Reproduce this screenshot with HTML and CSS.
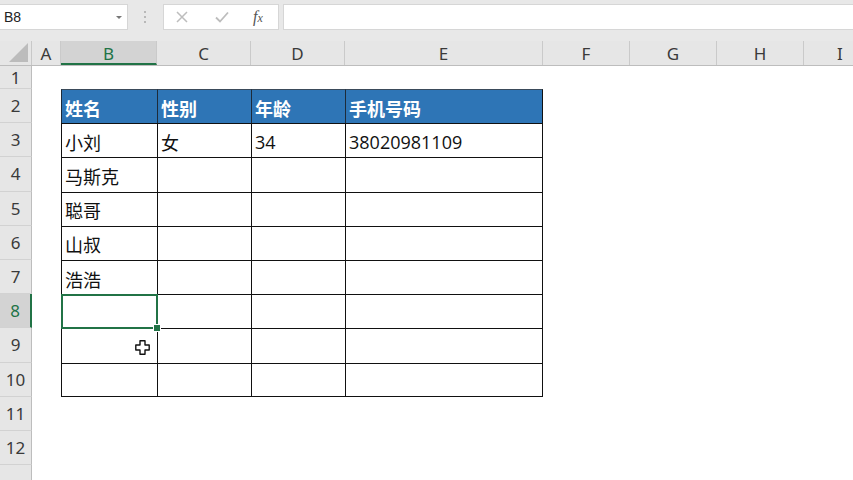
FILE: index.html
```html
<!DOCTYPE html>
<html lang="zh">
<head>
<meta charset="utf-8">
<title>Excel</title>
<link rel="stylesheet" href="styles.css">
</head>
<body>
<div class="app">
  <div class="fbar">
    <div class="namebox"><span class="ref">B8</span><span class="caret"></span></div>
    <div class="grip"><svg width="4" height="14" viewBox="0 0 4 14"><circle cx="2" cy="2" r="1" fill="#a8a8a8"/><circle cx="2" cy="7" r="1" fill="#a8a8a8"/><circle cx="2" cy="12" r="1" fill="#a8a8a8"/></svg></div>
    <div class="fxbox">
      <svg class="ico" width="12" height="12" viewBox="0 0 12 12"><path d="M1 1L11 11M11 1L1 11" stroke="#bdbdbd" stroke-width="1.5" fill="none"/></svg>
      <svg class="ico" width="14" height="12" viewBox="0 0 14 12"><path d="M1 6.5L5 10.5L13 1.5" stroke="#bdbdbd" stroke-width="1.8" fill="none"/></svg>
      <span class="fx">f<span class="x">x</span></span>
    </div>
    <div class="finput"></div>
  </div>

  <div class="sheet">
    <div class="row colhead">
      <div class="corner"><span class="tri"></span></div>
      <div class="ch wA">A</div>
      <div class="ch wB sel">B</div>
      <div class="ch wC">C</div>
      <div class="ch wD">D</div>
      <div class="ch wE">E</div>
      <div class="ch wF">F</div>
      <div class="ch wF">G</div>
      <div class="ch wF">H</div>
      <div class="ch rest">I</div>
    </div>

    <div class="row r1"><div class="rh">1</div><div class="rest"></div></div>

    <div class="row rr">
      <div class="rh">2</div><div class="c wA"></div>
      <div class="tc th wB">姓名</div><div class="tc th wC">性别</div><div class="tc th wD">年龄</div><div class="tc th wE last">手机号码</div>
      <div class="rest"></div>
    </div>
    <div class="row rr">
      <div class="rh">3</div><div class="c wA"></div>
      <div class="tc wB">小刘</div><div class="tc wC">女</div><div class="tc wD">34</div><div class="tc wE last">38020981109</div>
      <div class="rest"></div>
    </div>
    <div class="row rr">
      <div class="rh">4</div><div class="c wA"></div>
      <div class="tc wB">马斯克</div><div class="tc wC"></div><div class="tc wD"></div><div class="tc wE last"></div>
      <div class="rest"></div>
    </div>
    <div class="row rr">
      <div class="rh">5</div><div class="c wA"></div>
      <div class="tc wB">聪哥</div><div class="tc wC"></div><div class="tc wD"></div><div class="tc wE last"></div>
      <div class="rest"></div>
    </div>
    <div class="row rr">
      <div class="rh">6</div><div class="c wA"></div>
      <div class="tc wB">山叔</div><div class="tc wC"></div><div class="tc wD"></div><div class="tc wE last"></div>
      <div class="rest"></div>
    </div>
    <div class="row rr">
      <div class="rh">7</div><div class="c wA"></div>
      <div class="tc wB">浩浩</div><div class="tc wC"></div><div class="tc wD"></div><div class="tc wE last"></div>
      <div class="rest"></div>
    </div>
    <div class="row rr">
      <div class="rh rsel">8</div><div class="c wA"></div>
      <div class="tc wB active"></div><div class="tc wC"></div><div class="tc wD"></div><div class="tc wE last"></div>
      <div class="rest"></div>
    </div>
    <div class="row rr">
      <div class="rh">9</div><div class="c wA"></div>
      <div class="tc wB cur"><svg class="cursor" width="15" height="15" viewBox="0 0 15 15"><path d="M5 0.8H10V5H14.2V10H10V14.2H5V10H0.8V5H5Z" fill="#fff" stroke="#111" stroke-width="1.4" stroke-linejoin="round"/></svg></div><div class="tc wC"></div><div class="tc wD"></div><div class="tc wE last"></div>
      <div class="rest"></div>
    </div>
    <div class="row rr lastrow">
      <div class="rh">10</div><div class="c wA"></div>
      <div class="tc wB"></div><div class="tc wC"></div><div class="tc wD"></div><div class="tc wE last"></div>
      <div class="rest"></div>
    </div>
    <div class="row rr"><div class="rh">11</div><div class="rest"></div></div>
    <div class="row rr"><div class="rh">12</div><div class="rest"></div></div>
    <div class="row rr"><div class="rh"></div><div class="rest"></div></div>
  </div>
</div>
</body>
</html>
```

FILE: styles.css
```css
* { box-sizing: border-box; }
html, body { margin: 0; padding: 0; }
body {
  width: 853px;
  height: 480px;
  overflow: hidden;
  background: #fff;
  font-family: "Open Sans", "Noto Sans CJK SC", sans-serif;
}
.app { width: 853px; height: 480px; display: flex; flex-direction: column; }

/* formula bar */
.fbar {
  height: 41px;
  flex: none;
  background: #e8e8e8;
  display: flex;
  align-items: flex-start;
  padding-top: 4px;
}
.namebox {
  width: 128px;
  height: 26px;
  background: #fff;
  border: 1px solid #d6d6d6;
  border-left: none;
  display: flex;
  align-items: center;
  justify-content: space-between;
  padding: 0 5px 0 4px;
}
.ref { font-family: "Liberation Sans", sans-serif; font-size: 14px; color: #222; }
.caret {
  width: 0; height: 0;
  border-left: 3px solid transparent;
  border-right: 3px solid transparent;
  border-top: 3px solid #777;
}
.grip { width: 35px; height: 26px; display: flex; align-items: center; justify-content: center; padding-right: 1px; }
.fxbox {
  width: 116px;
  height: 26px;
  background: #fff;
  border: 1px solid #d6d6d6;
  display: flex;
  align-items: center;
  padding-left: 12px;
  gap: 0;
}
.fxbox .ico:first-child { margin-right: 27px; }
.fxbox .ico:nth-child(2) { margin-right: 24px; }
.fx {
  font-family: "Liberation Serif", serif;
  font-style: italic;
  font-size: 16px;
  color: #555;
  line-height: 1;
}
.fx .x { font-size: 12px; }
.finput {
  flex: 1;
  height: 26px;
  margin-left: 4px;
  background: #fff;
  border: 1px solid #d6d6d6;
  border-right: none;
}

/* sheet */
.sheet { flex: 1; display: flex; flex-direction: column; overflow: hidden; }
.row { display: flex; flex: none; }
.colhead { height: 25px; background: #e6e6e6; border-bottom: 1px solid #bdbdbd; }
.r1 { height: 23px; }
.rr { height: 34.2px; }

.corner {
  width: 32px;
  border-right: 1px solid #c8c8c8;
  position: relative;
}
.tri {
  position: absolute;
  right: 3px;
  bottom: 3px;
  width: 0; height: 0;
  border-left: 19px solid transparent;
  border-bottom: 19px solid #bcbcbc;
}
.ch {
  border-right: 1px solid #cacaca;
  font-size: 17px;
  color: #3a3a3a;
  display: flex;
  align-items: center;
  justify-content: center;
  padding-top: 1px;
  font-family: "Noto Sans", sans-serif;
}
.ch.sel { background: #d3d3d3; color: #217346; border-bottom: 2px solid #217346; padding-top: 2px; }
.wA { width: 29px; flex: none; }
.wB { width: 96px; flex: none; }
.wC { width: 94px; flex: none; }
.wD { width: 94px; flex: none; }
.wE { width: 198px; flex: none; }
.wF { width: 87px; flex: none; }
.rest { flex: 1; }
.ch.rest { justify-content: flex-start; padding-left: 33px; border-right: none; }

.rh {
  width: 32px;
  flex: none;
  background: #e6e6e6;
  border-right: 1px solid #bdbdbd;
  border-bottom: 1px solid #d2d2d2;
  font-family: "Noto Sans", sans-serif;
  font-size: 17px;
  color: #3a3a3a;
  display: flex;
  align-items: center;
  justify-content: center;
}
.r1 .rh { padding-top: 1px; }
.rh.rsel { background: #d3d3d3; color: #217346; border-right: 2px solid #217346; }

/* table cells */
.tc {
  border-left: 1px solid #111;
  border-top: 1px solid #111;
  font-size: 18px;
  color: #111;
  display: flex;
  align-items: center;
  padding: 2px 0 0 3px;
  white-space: nowrap;
}
.tc.last { border-right: 1px solid #111; }
.lastrow .tc { border-bottom: 1px solid #111; }
.tc.th {
  background: #2e75b6;
  color: #fff;
  font-weight: bold;
  border-left-color: #1d2b3a;
  border-top-color: #3a4a5a;
}

.active { position: relative; z-index: 3; }
.active::after {
  content: "";
  position: absolute;
  left: -1px;
  top: -1px;
  right: -1px;
  bottom: -1px;
  border: 2px solid #217346;
}
.active::before {
  content: "";
  position: absolute;
  right: -4px;
  bottom: -4px;
  width: 6px;
  height: 6px;
  background: #217346;
  border: 1px solid #fff;
  z-index: 2;
}
.cur { position: relative; }
.cursor { position: absolute; left: 73px; top: 11px; }
```
